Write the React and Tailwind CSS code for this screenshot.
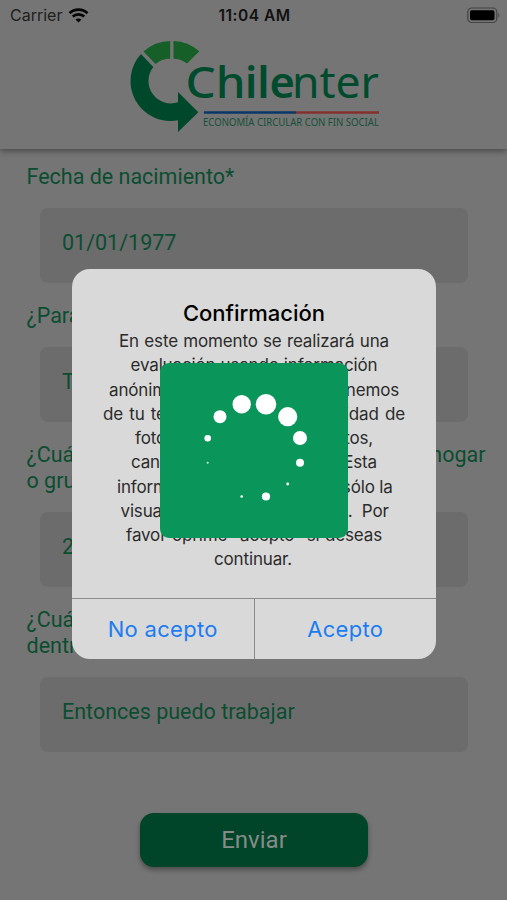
import * as React from "react";

const message = [
  { text: "En este momento se realizará una", width: 270 },
  { text: "evaluación usando información", width: 247 },
  { text: "anónima de datos que obtenemos", width: 290 },
  { text: "de tu teléfono, como la capacidad de", width: 302 },
  { text: "fotos, archivos y contactos,", width: 238 },
  { text: "canciones y calendario. Esta", width: 246 },
  { text: "información nos permitiría a sólo la", width: 274 },
  { text: "visualización de los registros. \u00a0Por", width: 267 },
  { text: "favor oprime “acepto” si deseas", width: 256 },
  { text: "continuar.", width: 80 },
];

const dots = [
  [106, 41.3, 10.3],
  [127.7, 53.7, 9.6],
  [140, 75, 7],
  [140, 99.7, 4],
  [127.7, 121, 1.4],
  [106, 133.5, 4.1],
  [81.7, 133.5, 1.3],
  [47.7, 99.7, 0.9],
  [47.7, 75.2, 3.3],
  [60, 53.7, 6.5],
  [81.7, 41.3, 9.2],
];

function StatusBar() {
  return (
    <div className="flex h-[30px] items-center justify-between pl-[10px] pr-[7px] font-['Inter'] text-[#111]">
      <div className="flex w-[120px] items-center gap-[6px]">
        <span className="text-[16px] leading-[30px] text-[#202020]">Carrier</span>
        <svg width="21" height="15" viewBox="0 0 20 15" fill="none" stroke="#050505" strokeWidth="2.7">
          <path d="M1 5.2C6 .4 14 .4 19 5.2" />
          <path d="M4.2 8.6c3.3-3 8.3-3 11.6 0" />
          <path d="M10 14.5 7 11.5c1.7-1.5 4.3-1.5 6 0Z" fill="#050505" stroke="none" />
        </svg>
      </div>
      <span className="mr-px mt-px text-[15.5px] font-semibold tracking-[0.5px]">11:04 AM</span>
      <div className="flex w-[120px] justify-end">
        <svg width="33" height="17" viewBox="0 0 33 17">
          <rect x="0.8" y="1" width="29" height="14.5" rx="4" fill="none" stroke="#444" strokeWidth="1.2" />
          <rect x="3" y="3.2" width="24.5" height="10" rx="1.8" fill="#000" />
          <path d="M31.3 6v4.5c1.5-.8 1.5-3.7 0-4.5Z" fill="#444" />
        </svg>
      </div>
    </div>
  );
}

function Logo() {
  return (
    <svg className="ml-[129px] mt-[9px] overflow-visible" width="252" height="94" viewBox="129 39 252 94">
      <path d="M170.2 41V58.7A22 22 0 0 0 155.5 64L143.5 51.5A41 41 0 0 1 170.2 41Z" fill="#165f29" />
      <path d="M173.5 41V58.7A22 22 0 0 1 187 63.5L199.3 51.3A41 41 0 0 0 173.5 41Z" fill="#165f29" />
      <path d="M141 54A40 40 0 0 0 178 120.3V132L198.3 112.3 178 92V102.3A22.5 22.5 0 0 1 153.3 67Z" fill="#00482b" />
      <g fill="#004a2e" fontFamily="'Noto Sans', sans-serif" fontSize="44">
        <text x="185.5" y="98" fontWeight="500" textLength="60" lengthAdjust="spacingAndGlyphs">Ch</text>
        <text x="245" y="98" fontWeight="600" textLength="50" lengthAdjust="spacingAndGlyphs">ile</text>
        <text x="292" y="98" textLength="87" lengthAdjust="spacingAndGlyphs">nter</text>
      </g>
      <path d="M204 112.5h92" stroke="#0b3768" strokeWidth="2.4" />
      <path d="M296 112.5h83" stroke="#84302f" strokeWidth="2.4" />
      <text x="203" y="126.3" fontFamily="'Noto Sans', sans-serif" fontSize="10" fill="#175039" textLength="176" lengthAdjust="spacingAndGlyphs">ECONOMÍA CIRCULAR CON FIN SOCIAL</text>
    </svg>
  );
}

function Field({ label, value, className }) {
  return (
    <div className={className}>
      <p className="ml-[26.5px] text-[21.5px] leading-[26px]">{label}</p>
      <div className="ml-[40px] mt-[18px] h-[75px] w-[428px] rounded-[8px] bg-[#6c6c6c] pl-[22px] text-[21.5px] leading-[69px]">
        {value}
      </div>
    </div>
  );
}

function Spinner() {
  return (
    <div className="absolute left-[160px] top-[363px] h-[175px] w-[188px] rounded-[9px] bg-[#0a965a]">
      <svg width="188" height="175" fill="#fff">
        {dots.map(([x, y, r]) => (
          <circle key={`${x}-${y}`} cx={x} cy={y} r={r} />
        ))}
      </svg>
    </div>
  );
}

function Dialog() {
  return (
    <div className="absolute left-[72px] top-[269px] flex h-[390px] w-[364px] flex-col overflow-hidden rounded-[18px] bg-[#d9d9d9] font-['Inter']">
      <div className="flex h-[329px] flex-col items-center pt-[28px]">
        <h2 className="whitespace-nowrap text-[22px] font-medium leading-[32px] text-black">Confirmación</h2>
        {message.map(({ text, width }) => (
          <p
            key={text}
            className="h-[24.25px] whitespace-nowrap text-[17px] leading-[25px] tracking-[-0.15px] text-[#2b2b2b] [text-align-last:justify]"
            style={{ width }}
          >
            {text}
          </p>
        ))}
      </div>
      <div className="flex flex-1 border-t-[1.5px] border-[#8b8b8b] text-[22px] tracking-[0.3px] text-[#1c7df2]">
        <button className="w-[182.5px] border-r-[1.5px] border-[#8b8b8b]">No acepto</button>
        <button className="flex-1">Acepto</button>
      </div>
    </div>
  );
}

export default function App() {
  return (
    <div className="relative h-[900px] w-[507px] overflow-hidden bg-[#757575] font-['Roboto'] text-[#0b4d31]">
      <header className="relative h-[149px] bg-[#757575] shadow-[0_2px_6px_rgba(0,0,0,0.4)]">
        <StatusBar />
        <Logo />
      </header>
      <main>
        <Field className="mt-[15px]" label="Fecha de nacimiento*" value="01/01/1977" />
        <Field className="mt-[20px]" label="¿Para qué lo usas?" value="Trabajo" />
        <Field
          className="mt-[20px]"
          label={
            <>
              <span className="block w-[459px] whitespace-nowrap [text-align-last:justify]">
                ¿Cuántas personas componen ahora tu hogar
              </span>
              o grupo familiar?
            </>
          }
          value="2"
        />
        <Field
          className="mt-[20px]"
          label={
            <>
              ¿Cuál es tu situación
              <br />
              dentro del hogar?
            </>
          }
          value="Entonces puedo trabajar"
        />
        <button className="ml-[140px] mt-[61px] h-[54px] w-[228px] rounded-[14px] bg-[#004529] text-[24px] text-[#858c88] shadow-[0_3px_5px_rgba(0,0,0,0.35)]">
          Enviar
        </button>
      </main>
      <Dialog />
      <Spinner />
    </div>
  );
}
